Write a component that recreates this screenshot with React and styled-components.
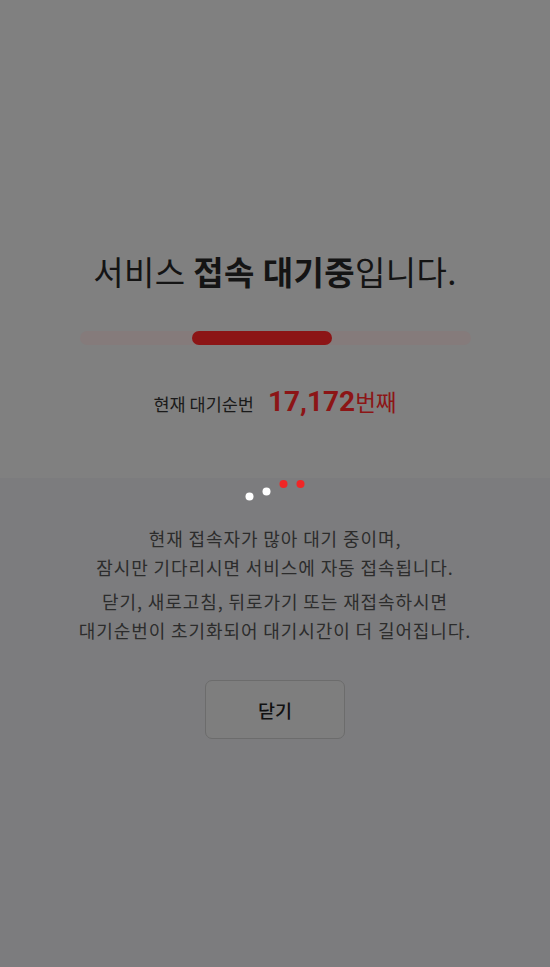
import React from 'react';
import styled, { createGlobalStyle } from 'styled-components';

const GlobalStyle = createGlobalStyle`
  html, body {
    margin: 0;
    padding: 0;
    background: #7c7c7e;
  }
  body {
    font-family: 'Noto Sans CJK KR', 'Noto Sans', sans-serif;
  }
`;

const Page = styled.div`
  width: 550px;
  min-height: 967px;
  background: #7c7c7e;
`;

const TopArea = styled.section`
  height: 478px;
  box-sizing: border-box;
  padding-top: 249px;
  background: #808080;
  display: flex;
  flex-direction: column;
  align-items: center;
`;

const Title = styled.h1`
  margin: 0;
  font-size: 33px;
  line-height: 45px;
  font-weight: 400;
  color: #141414;
  letter-spacing: 0.4px;
  strong {
    font-weight: 700;
  }
`;

const Track = styled.div`
  margin-top: 37px;
  width: 391px;
  height: 14px;
  border-radius: 7px;
  background: #857b7b;
  overflow: hidden;
  position: relative;
`;

const Fill = styled.div`
  position: absolute;
  top: 0;
  height: 100%;
  border-radius: 7px;
  background: #8c1516;
`;

const Rank = styled.div`
  margin-top: 40px;
  display: flex;
  align-items: baseline;
  gap: 14px;
  color: #1a1a1a;
`;

const RankLabel = styled.span`
  font-size: 17.5px;
`;

const RankValue = styled.span`
  color: #8c1516;
  font-size: 22.5px;
  b {
    font-family: 'Roboto', 'Noto Sans', sans-serif;
    font-size: 28px;
    font-weight: 700;
  }
`;

const BottomArea = styled.section`
  display: flex;
  flex-direction: column;
  align-items: center;
`;

const Loader = styled.svg`
  display: block;
  width: 70px;
  height: 24px;
`;

const Message = styled.p`
  margin: ${(p) => (p.$first ? '22px' : '5px')} 0 0;
  font-size: 18px;
  line-height: 29px;
  text-align: center;
  color: #2c2c2c;
  letter-spacing: 0.9px;
`;

const CloseButton = styled.button`
  margin-top: 35px;
  width: 140px;
  height: 59px;
  box-sizing: border-box;
  border: 1px solid #6c6c6c;
  border-radius: 7px;
  background: #7e7e7e;
  font-family: inherit;
  font-size: 18.5px;
  font-weight: 500;
  color: #111;
  cursor: pointer;
`;

const App = () => {
  const progress = { left: 112, width: 140 };
  return (
    <>
      <GlobalStyle />
      <Page>
        <TopArea>
          <Title>
            서비스 <strong>접속 대기중</strong>입니다.
          </Title>
          <Track>
            <Fill style={{ left: progress.left, width: progress.width }} />
          </Track>
          <Rank>
            <RankLabel>현재 대기순번</RankLabel>
            <RankValue>
              <b>17,172</b>번째
            </RankValue>
          </Rank>
        </TopArea>
        <BottomArea>
          <Loader viewBox="0 0 70 24">
            <circle cx="9.5" cy="18.5" r="4" fill="#ffffff" />
            <circle cx="26.5" cy="13.5" r="4" fill="#ffffff" />
            <circle cx="43.5" cy="6" r="4" fill="#f02626" />
            <circle cx="60.5" cy="6" r="4" fill="#f02626" />
          </Loader>
          <Message $first>
            현재 접속자가 많아 대기 중이며,
            <br />
            잠시만 기다리시면 서비스에 자동 접속됩니다.
          </Message>
          <Message>
            닫기, 새로고침, 뒤로가기 또는 재접속하시면
            <br />
            대기순번이 초기화되어 대기시간이 더 길어집니다.
          </Message>
          <CloseButton>닫기</CloseButton>
        </BottomArea>
      </Page>
    </>
  );
};

export default App;
